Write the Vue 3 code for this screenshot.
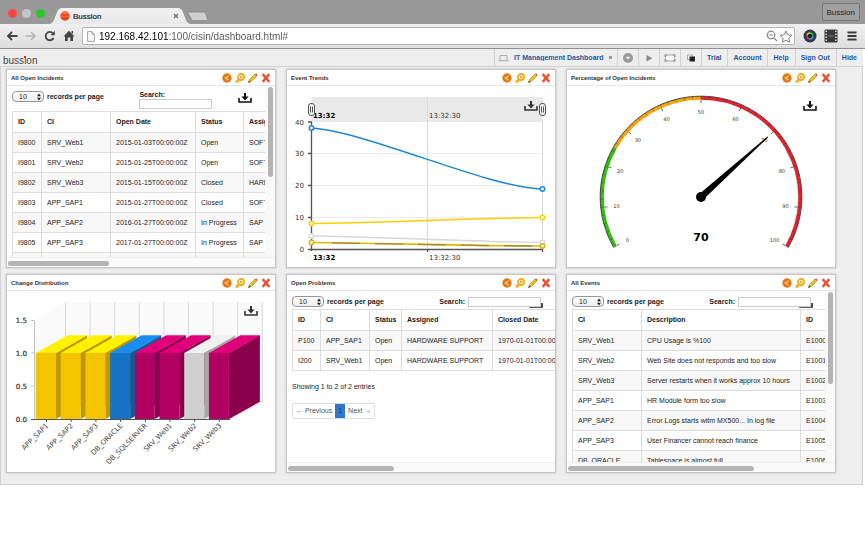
<script setup>
import { ref } from 'vue'

const address = ref('192.168.42.101:100/cisin/dashboard.html#')
const links = ['Trial', 'Account', 'Help', 'Sign Out', 'Hide']
const tools = [
  { id: 'menu-down', label: 'More dashboards' },
  { id: 'play', label: 'Play' },
  { id: 'fullscreen', label: 'Full screen' },
  { id: 'copy', label: 'Duplicate' }
]
const actions = [
  { id: 'share', label: 'Share' },
  { id: 'key', label: 'Filter' },
  { id: 'pencil', label: 'Edit' },
  { id: 'remove', label: 'Remove' }
]

const cards = [
  {
    key: 'incidents',
    title: 'All Open Incidents',
    kind: 'table',
    vertical: true,
    thumbX: 38,
    thumbY: 53,
    cols: [
      { name: 'ID', width: 29 },
      { name: 'CI', width: 69 },
      { name: 'Open Date', width: 85 },
      { name: 'Status', width: 48 },
      { name: 'Assigned', width: 91 }
    ],
    rows: [
      ['I9800', 'SRV_Web1', '2015-01-03T00:00:00Z', 'Open', 'SOFTWARE'],
      ['I9801', 'SRV_Web2', '2015-01-25T00:00:00Z', 'Open', 'SOFTWARE'],
      ['I9802', 'SRV_Web3', '2015-01-15T00:00:00Z', 'Closed', 'HARDWARE'],
      ['I9803', 'APP_SAP1', '2015-01-27T00:00:00Z', 'Closed', 'SOFTWARE'],
      ['I9804', 'APP_SAP2', '2016-01-27T00:00:00Z', 'In Progress', 'SAP'],
      ['I9805', 'APP_SAP3', '2017-01-27T00:00:00Z', 'In Progress', 'SAP'],
      ['', '', '', '', '']
    ]
  },
  { key: 'trends', title: 'Event Trends', kind: 'trend' },
  { key: 'gauge', title: 'Percentage of Open Incidents', kind: 'gauge' },
  { key: 'changes', title: 'Change Distribution', kind: 'bars' },
  {
    key: 'problems',
    title: 'Open Problems',
    kind: 'table',
    compact: true,
    pager: true,
    thumbX: 40,
    cols: [
      { name: 'ID', width: 28 },
      { name: 'CI', width: 49 },
      { name: 'Status', width: 32 },
      { name: 'Assigned', width: 91 },
      { name: 'Closed Date', width: 85 }
    ],
    rows: [
      ['P100', 'APP_SAP1', 'Open', 'HARDWARE SUPPORT', '1970-01-01T00:00:00Z'],
      ['I200', 'SRV_Web1', 'Open', 'HARDWARE SUPPORT', '1970-01-01T00:00:00Z']
    ]
  },
  {
    key: 'events',
    title: 'All Events',
    kind: 'table',
    compact: true,
    vertical: true,
    thumbX: 70,
    thumbY: 54,
    cols: [
      { name: 'CI', width: 69 },
      { name: 'Description', width: 159 },
      { name: 'ID', width: 40 }
    ],
    rows: [
      ['SRV_Web1', 'CPU Usage is %100', 'E1000'],
      ['SRV_Web2', 'Web Site does not responds and too slow', 'E1001'],
      ['SRV_Web3', 'Server restarts when it works approx 10 hours', 'E1002'],
      ['APP_SAP1', 'HR Module form too slow', 'E1003'],
      ['APP_SAP2', 'Error Logs starts witm MX500... İn log file', 'E1004'],
      ['APP_SAP3', 'User Financer cannot reach finance', 'E1005'],
      ['DB_ORACLE', 'Tablespace is almost full', 'E1006']
    ]
  }
]
const tableWidth = (cols) => cols.reduce((sum, c) => sum + c.width, 0)

// Gauge geometry: 0..100 is spread over 240 degrees, 50 at the top
const CX = 134
const CY = 111
const at = (value, r) => {
  const a = ((value - 50) * 2.4 * Math.PI) / 180
  return [CX + r * Math.sin(a), CY - r * Math.cos(a)]
}
const arc = (from, to, r) => {
  const large = (to - from) * 2.4 > 180 ? 1 : 0
  return `M${at(from, r).join(' ')} A${r} ${r} 0 ${large} 1 ${at(to, r).join(' ')}`
}
const tick = (value, r1, r2) => `M${at(value, r1).join(' ')} L${at(value, r2).join(' ')}`
const majors = Array.from({ length: 11 }, (_, i) => i * 10)
const minors = Array.from({ length: 51 }, (_, i) => i * 2)

// Three-dimensional bars
const palette = {
  yellow: ['#f5c400', '#fff200', '#bf9900'],
  blue: ['#1774c4', '#1b8df2', '#125b99'],
  magenta: ['#b20062', '#e0007a', '#8a004c'],
  gray: ['#d0d0d1', '#f0f0f0', '#a6a6a6']
}
const bars = [
  ['APP_SAP1', 'yellow'],
  ['APP_SAP2', 'yellow'],
  ['APP_SAP3', 'yellow'],
  ['DB_ORACLE', 'blue'],
  ['DB_SQLSERVER', 'magenta'],
  ['SRV_Web1', 'magenta'],
  ['SRV_Web2', 'gray'],
  ['SRV_Web3', 'magenta']
].map(([name, tone], i) => ({ name, x: 29 + i * 24.7, c: palette[tone] }))
const walls = Array.from({ length: 9 }, (_, i) => 58.5 + i * 24.6)

const trendDots = [
  [24.5, 150, '#d8d8d8'], [255.5, 156.5, '#d8d8d8'],
  [24.5, 42, '#1c86d6'], [255.5, 103, '#1c86d6'],
  [24.5, 137.5, '#ffcf00'], [255.5, 131.5, '#ffcf00'],
  [24.5, 156.5, '#d9b400'], [255.5, 160, '#d9b400']
]
</script>

<template>
  <svg class="sprite" aria-hidden="true">
    <symbol id="download" viewBox="0 0 14 10">
      <path d="M1 5v4h12V5" fill="none" stroke="currentColor" stroke-width="1.6" />
      <path d="M6 0h2v3.5h2.6L7 7.4 3.4 3.5H6z" fill="currentColor" />
    </symbol>
    <symbol id="share" viewBox="0 0 9 9">
      <circle cx="4.5" cy="4.5" r="4.2" fill="#e8780c" />
      <path d="M6 2.6 3 4.5l3 1.9" fill="none" stroke="#ffe2b0" stroke-width="1" />
    </symbol>
    <symbol id="key" viewBox="0 0 9 9">
      <circle cx="5.4" cy="3.6" r="2.8" fill="#fff0b8" stroke="#f5a80c" stroke-width="1.4" />
      <circle cx="5.5" cy="3.5" r=".9" fill="#f09000" />
      <path d="M3.5 5.5.6 8.5M2 7l1.4 1.2" fill="none" stroke="#f5a80c" stroke-width="1.5" />
    </symbol>
    <symbol id="pencil" viewBox="0 0 9 9">
      <path d="M.5 8.500l.8-2.400L6.400 1 8 2.600 2.900 7.700z" fill="#f0c41c" stroke="#8a6a10" stroke-width=".5" />
      <path d="M6.200 1.200 7.300.2 8.800 1.700 7.800 2.800z" fill="#d9604a" />
      <path d="M.3 8.800.9 7l1.200 1.200z" fill="#333" />
    </symbol>
    <symbol id="remove" viewBox="0 0 9 9">
      <path d="M1.500 1 7.500 8M7.500 1 1.500 8" stroke="#ec5238" stroke-width="2.200" />
    </symbol>
    <symbol id="menu-down" viewBox="0 0 12 12">
      <circle cx="6" cy="6" r="5" fill="#9a9a9a" />
      <path d="M3.600 4.800h4.800L6 7.600z" fill="#f4f4f4" />
    </symbol>
    <symbol id="play" viewBox="0 0 12 12"><path d="M3.500 3v6.400L9.500 6.200z" fill="#8c8c8c" /></symbol>
    <symbol id="fullscreen" viewBox="0 0 12 12">
      <rect x="1.500" y="3" width="9" height="6" fill="#f6f6f6" stroke="#b0b0b0" />
      <path d="M1 5V3h2.500M8.500 3H11v2M11 7v2H8.500M3.500 9H1V7" fill="none" stroke="#999" stroke-width="1.200" />
    </symbol>
    <symbol id="copy" viewBox="0 0 12 12">
      <rect x="2.500" y="3" width="5" height="4.500" fill="#f4f4f4" stroke="#aaa" />
      <rect x="4.500" y="4.500" width="5.500" height="5" fill="#222" />
    </symbol>
  </svg>

  <header class="browser">
    <div class="titlebar">
      <span class="light red"></span><span class="light idle"></span><span class="light green"></span>
      <div class="tab">
        <svg class="favicon" viewBox="0 0 10 10" aria-hidden="true">
          <circle cx="5" cy="5" r="4.700" fill="#e8451c" />
          <path d="M.8 3a4.700 4.700 0 0 1 8.400 0z" fill="#f4754e" />
          <path d="M.5 5.200h9" stroke="#ff8a50" stroke-width=".8" />
        </svg>
        <span class="tab-title">Bussion</span>
        <button class="close" aria-label="Close tab">
          <svg viewBox="0 0 6 6"><path d="M1 1l4 4M5 1 1 5" stroke="#666" stroke-width="1.100" /></svg>
        </button>
      </div>
      <button class="new-tab" aria-label="New tab">
        <svg viewBox="0 0 22 11"><path d="M1.500 1h15.500q1.200 0 1.700 1.200l2 6.300q.3 1.200-1 1.200H6.200q-1.200 0-1.700-1.200L1 2.200Q.7 1 1.500 1z" fill="#cfcfcf" stroke="#7d7d7d" stroke-width=".8" /></svg>
      </button>
      <button class="profile">Bussion</button>
    </div>
    <div class="toolbar">
      <button class="tool" aria-label="Back">
        <svg viewBox="0 0 12 12"><path d="M11.500 6H2.500M6 2 2 6l4 4" fill="none" stroke="#444" stroke-width="1.800" /></svg>
      </button>
      <button class="tool" aria-label="Forward">
        <svg viewBox="0 0 12 12"><path d="M.5 6h9M6 2l4 4-4 4" fill="none" stroke="#b4b4b4" stroke-width="1.600" /></svg>
      </button>
      <button class="tool" aria-label="Reload">
        <svg viewBox="0 0 12 12"><path d="M9.600 8A4.200 4.200 0 1 1 9 3.200" fill="none" stroke="#444" stroke-width="1.800" /><path d="M10.800.8v4.400H6.500z" fill="#444" /></svg>
      </button>
      <button class="tool" aria-label="Home">
        <svg viewBox="0 0 12 12"><path d="M6 .8 11.500 6.500H10V11H7.300V7.500H4.700V11H2V6.500H.5z" fill="#444" /><path d="M8.500 1h1.500v3L8.500 2.500z" fill="#444" /></svg>
      </button>
      <div class="address">
        <svg class="page" viewBox="0 0 8 11" aria-hidden="true"><path d="M.6.6h4.400l2.400 2.600v7.200H.6zM5 .6v2.600h2.400" fill="#fafafa" stroke="#999" stroke-width=".9" /></svg>
        <input v-model="address" class="url" type="text" aria-label="Address" />
        <svg class="lens" viewBox="0 0 12 12" aria-hidden="true"><circle cx="5" cy="5" r="3.800" fill="none" stroke="#888" stroke-width="1.200" /><path d="M3 5h4M8 8l3 3" stroke="#888" stroke-width="1.200" /></svg>
        <svg class="star" viewBox="0 0 14 13" aria-hidden="true"><path d="M7 1l1.700 3.900 4.300.4-3.200 2.800.9 4.100L7 10.100 3.300 12.200l.9-4.100L1 5.300l4.300-.4z" fill="#fff" stroke="#808080" /></svg>
      </div>
      <svg class="ext" viewBox="0 0 14 14" aria-hidden="true">
        <circle cx="7" cy="7" r="6.500" fill="#333945" />
        <circle cx="7" cy="7" r="3" fill="#111" />
        <path d="M4.200 6.500A3 3 0 0 1 7 4" fill="none" stroke="#f0c020" stroke-width="1.600" />
        <path d="M7 4a3 3 0 0 1 2.800 2.500" fill="none" stroke="#30c050" stroke-width="1.600" />
        <path d="M9.800 7A3 3 0 0 1 7 10" fill="none" stroke="#28a8e8" stroke-width="1.600" />
        <path d="M7 10a3 3 0 0 1-2.800-3" fill="none" stroke="#d83090" stroke-width="1.600" />
      </svg>
      <svg class="ext" viewBox="0 0 14 14" aria-hidden="true">
        <rect x=".5" y=".5" width="13" height="13" rx="1" fill="#3a3a3a" />
        <path d="M2.200 1.500v11M11.800 1.500v11" stroke="#ddd" stroke-width="1.400" stroke-dasharray="1.500 1.500" />
        <path d="M4 7h6" stroke="#888" stroke-width=".8" />
      </svg>
      <button class="tool menu" aria-label="Browser menu">
        <svg viewBox="0 0 12 12"><path d="M1.500 2.500h9M1.500 6h9M1.500 9.500h9" stroke="#3c3c3c" stroke-width="2" /></svg>
      </button>
    </div>
  </header>

  <div class="appbar">
    <span class="brand">buss<span class="dot-i">i</span>on</span>
    <nav class="nav">
      <div class="cell picker">
        <svg class="laptop" viewBox="0 0 11 8" aria-hidden="true"><path d="M2 6V1.500h7V6M.3 6.800h10.400" fill="none" stroke="#aaa" /></svg>
        <select aria-label="Dashboard"><option>IT Management Dashboard</option></select>
        <span class="caret"></span>
      </div>
      <button v-for="t in tools" :key="t.id" class="cell icon-cell" :aria-label="t.label">
        <svg><use :href="'#' + t.id" /></svg>
      </button>
      <a v-for="l in links" :key="l" class="cell link" href="#">{{ l }}</a>
    </nav>
  </div>

  <main class="dashboard">
    <section v-for="card in cards" :key="card.key" class="card">
      <header class="card-head">
        <h2>{{ card.title }}</h2>
        <button v-for="a in actions" :key="a.id" class="action" :aria-label="a.label">
          <svg><use :href="'#' + a.id" /></svg>
        </button>
      </header>

      <div v-if="card.kind === 'table'" class="scroller" :class="{ both: card.vertical }">
        <div class="view">
          <div class="controls" :class="{ compact: card.compact }">
            <div class="length">
              <span class="select-box">
                <select :id="card.key + '-length'"><option>10</option></select>
                <svg viewBox="0 0 6 8" aria-hidden="true"><path d="M1 3.300 3 .5l2 2.800zM1 4.700 3 7.500l2-2.800z" fill="#222" /></svg>
              </span>
              <label :for="card.key + '-length'">records per page</label>
            </div>
            <div class="find">
              <label :for="card.key + '-search'">Search:</label>
              <span class="find-box">
                <svg v-if="card.compact" class="tucked"><use href="#download" /></svg>
                <input :id="card.key + '-search'" type="text" />
              </span>
            </div>
            <button v-if="!card.compact" class="download" aria-label="Download"><svg><use href="#download" /></svg></button>
          </div>
          <table :style="{ width: tableWidth(card.cols) + 'px' }">
            <colgroup><col v-for="c in card.cols" :key="c.name" :style="{ width: c.width + 'px' }" /></colgroup>
            <thead><tr><th v-for="c in card.cols" :key="c.name" scope="col">{{ c.name }}</th></tr></thead>
            <tbody>
              <tr v-for="(row, r) in card.rows" :key="r"><td v-for="(v, i) in row" :key="i">{{ v }}</td></tr>
            </tbody>
          </table>
          <template v-if="card.pager">
            <p class="summary">Showing 1 to 2 of 2 entries</p>
            <div class="pager"><a href="#">← Previous</a><a href="#" class="current">1</a><a href="#">Next →</a></div>
          </template>
        </div>
        <div v-if="card.vertical" class="track-y"><div class="thumb" :style="{ height: card.thumbY + '%' }"></div></div>
        <div class="track-x"><div class="thumb" :style="{ width: card.thumbX + '%' }"></div></div>
      </div>

      <svg v-else-if="card.kind === 'trend'" class="chart" viewBox="0 0 268 181" role="img" aria-label="Event trends">
        <rect x="24.500" y="11" width="231.500" height="25" fill="#e9e9e9" />
        <path d="M25 67.500h230M25 99.500h230M25 131.500h230" stroke="#ececec" />
        <path d="M140.500 11v152M255.500 36v127" stroke="#dadada" />
        <path d="M24.500 36v129M21 36h4M21 67.500h4M21 99.500h4M21 131.500h4M21 163.500h235M140.500 163v3M255.500 163v3" fill="none" stroke="#555" stroke-width="1.300" />
        <g class="axis" text-anchor="end">
          <text x="17" y="39">40</text><text x="17" y="70">30</text><text x="17" y="102">20</text>
          <text x="17" y="134">10</text><text x="17" y="166">0</text>
        </g>
        <g class="axis">
          <text x="26" y="32" class="strong">13:32</text><text x="142" y="32">13:32:30</text>
          <text x="26" y="174" class="strong">13:32</text><text x="142" y="174">13:32:30</text>
        </g>
        <g fill="none" stroke-width="1.500">
          <path d="M24.500 150C82 150.500 198 156 255.500 156.500" stroke="#d8d8d8" />
          <path d="M24.500 42C82 46 198 101 255.500 103" stroke="#1c86d6" />
          <path d="M24.500 137.500C82 137 198 132 255.500 131.500" stroke="#ffcf00" />
          <path d="M24.500 156.500C82 157 198 160 255.500 160" stroke="#e0ba00" stroke-width="1.700" />
          <path d="M45 156.800C90 157.500 198 160 255.500 160" stroke="#a3872c" stroke-width="1.300" stroke-dasharray="28 15" />
        </g>
        <circle v-for="(d, i) in trendDots" :key="i" :cx="d[0]" :cy="d[1]" r="2.200" fill="#fff" :stroke="d[2]" stroke-width="1.500" />
        <g fill="#f4f4f4" stroke="#555">
          <rect x="21.500" y="17.500" width="6" height="12" rx="2.500" /><path d="M23.500 20.500v6M25.500 20.500v6" />
          <rect x="252.500" y="17.500" width="6" height="12" rx="2.500" /><path d="M254.500 20.500v6M256.500 20.500v6" />
        </g>
        <use href="#download" x="237" y="15" width="14" height="10" color="#333" />
      </svg>

      <svg v-else-if="card.kind === 'gauge'" class="chart" viewBox="0 0 268 181" role="img" aria-label="70 percent of incidents are open">
        <g fill="none">
          <path :d="arc(0, 25, 99)" stroke="#2fc20a" stroke-width="3.500" />
          <path :d="arc(25, 50, 99)" stroke="#fba30a" stroke-width="3.500" />
          <path :d="arc(50, 100, 99)" stroke="#e32330" stroke-width="3.500" />
          <path :d="arc(0, 100, 100.8)" stroke="#333" stroke-width=".9" />
          <path v-for="m in minors" :key="m" :d="tick(m, 101, 97.5)" stroke="#222" stroke-opacity=".5" stroke-width=".6" />
          <path v-for="m in majors" :key="m" :d="tick(m, 97, 94)" stroke="#444" stroke-width=".8" />
        </g>
        <g class="scale" text-anchor="middle">
          <text v-for="m in majors" :key="m" :x="at(m, 85)[0]" :y="at(m, 85)[1] + 2">{{ m }}</text>
        </g>
        <path d="M-3.500 0-.5-90H.5L3.500 0z" :transform="`translate(${CX} ${CY}) rotate(48)`" />
        <circle :cx="CX" :cy="CY" r="5" />
        <text class="reading" :x="CX" y="155" text-anchor="middle">70</text>
        <use href="#download" x="236" y="15" width="14" height="10" color="#111" />
      </svg>

      <svg v-else class="chart" viewBox="0 0 268 181" role="img" aria-label="Change distribution">
        <path d="M27.300 29.500 58.500 11.300H255.300V110.700L223 128H27.300z" fill="#fafafa" />
        <path d="M58.500 110.500h197L223 128" fill="none" stroke="#e2e2e2" />
        <path v-for="w in walls" :key="w" :d="`M${w} 11V111`" stroke="#d9d9d9" />
        <path d="M27.500 29.500V128M24 29.500h3.500M24 62h3.500M24 95h3.500" stroke="#c4c4c4" fill="none" />
        <g v-for="b in bars" :key="b.name" :transform="`translate(${b.x} 0)`">
          <path d="M20 62 51 44.300V110.700L20 128z" :fill="b.c[2]" />
          <path d="M0 62 31.500 44.300H51.500L20 62z" :fill="b.c[1]" />
          <path d="M0 62h20v66H0z" :fill="b.c[0]" />
          <path d="M10.500 128v3" stroke="#555" />
          <text class="bar-label" transform="translate(13 135) rotate(-45)" text-anchor="end">{{ b.name }}</text>
        </g>
        <path d="M24 128.500h199" stroke="#555" />
        <g class="axis semi" text-anchor="end">
          <text x="20" y="32">1.5</text><text x="20" y="65">1.0</text><text x="20" y="98">0.5</text><text x="20" y="131">0.0</text>
        </g>
        <use href="#download" x="237" y="15" width="14" height="10" color="#333" />
      </svg>
    </section>
  </main>
</template>

<style>
body {
  margin: 0;
  background: #fff;
  font-family: "Liberation Sans", Arial, sans-serif;
}
</style>

<style scoped>
* { box-sizing: border-box; }
button, select, input {
  margin: 0;
  padding: 0;
  border: 0;
  background: none;
  font: inherit;
  color: inherit;
  appearance: none;
  border-radius: 0;
}
button svg { display: block; width: 100%; height: 100%; }
a { color: inherit; text-decoration: none; }
.sprite { position: absolute; width: 0; height: 0; }

.titlebar {
  display: flex;
  align-items: center;
  height: 24px;
  padding: 0 5px 0 8px;
  background: #999;
}
.light { width: 9px; height: 9px; margin: 2px 5px 0 0; border-radius: 50%; }
.red { background: #fc4744; }
.idle { background: #c6c6c6; }
.green { background: #2ec52f; }
.tab {
  display: flex;
  align-self: flex-end;
  align-items: center;
  width: 140px;
  height: 16px;
  padding: 0 11px 0 10px;
  background: linear-gradient(#f2f2f2, #e8e8e8);
  clip-path: polygon(0 100%, 3px 88%, 8px 12%, 11px 0, 129px 0, 132px 12%, 137px 88%, 140px 100%);
}
.favicon { width: 10px; height: 10px; }
.tab-title { flex: 1; margin-left: 3px; font-size: 8px; color: #222; -webkit-text-stroke: 0.2px #222; }
.close { width: 6px; height: 6px; }
.new-tab { width: 22px; height: 11px; margin-left: -3px; margin-top: 8px; }
.profile {
  height: 18px;
  margin-left: auto;
  padding: 0 4px;
  border: 1px solid #777;
  border-radius: 2px;
  background: #a0a0a0;
  font-size: 8px;
  color: #222;
}
.toolbar {
  display: flex;
  align-items: center;
  gap: 7px;
  height: 25px;
  padding: 0 7px 0 6px;
  border-bottom: 1px solid #909090;
  background: linear-gradient(#f0f0f0, #dedede);
}
.tool { width: 12px; height: 12px; }
.address {
  display: flex;
  flex: 1;
  align-items: center;
  height: 18px;
  margin-right: 1px;
  padding: 0 1px 0 4px;
  border: 1px solid #b4b4b4;
  border-radius: 2px;
  background: #fff;
}
.page { width: 8px; height: 11px; margin-right: 4px; }
.url {
  flex: 1;
  min-width: 0;
  height: 16px;
  font-size: 10px;
  background: linear-gradient(90deg, #000 69px, #555 69px);
  background-clip: text;
  -webkit-text-fill-color: transparent;
}
.lens { width: 12px; height: 12px; margin-right: 1px; }
.star { width: 14px; height: 13px; }
.ext { width: 14px; height: 14px; }
.menu { margin-left: 1px; }

.appbar {
  display: flex;
  align-items: stretch;
  justify-content: space-between;
  height: 17px;
  margin-right: 2px;
  background: #eee;
}
.brand { padding: 6px 0 0 3px; font-size: 10px; line-height: 11px; color: #444; }
.dot-i { position: relative; }
.dot-i::before {
  content: "";
  position: absolute;
  top: 1px;
  left: 0;
  width: 2px;
  height: 2px;
  background: #f02010;
}
.nav { display: flex; font-size: 7px; font-weight: bold; color: #2457a3; }
.cell { display: flex; align-items: center; border-left: 1px solid #d2d2d2; }
.picker { gap: 5px; padding: 0 5px 0 3px; }
.picker select { height: 14px; }
.laptop { width: 11px; height: 8px; }
.caret { width: 3px; height: 3px; background: #999; }
.icon-cell { justify-content: center; width: 21px; }
.icon-cell svg { width: 12px; height: 12px; }
.link { padding: 0 6px 0 5px; }

.dashboard {
  display: grid;
  grid-template-columns: repeat(3, minmax(0, 1fr));
  gap: 6px 10px;
  margin-right: 2px;
  padding: 2px 26px 11px 5px;
  border: 1px solid #d2d2d2;
  background: #eee;
}
.card {
  display: flex;
  flex-direction: column;
  height: 199px;
  border: 1px solid #c6c6c6;
  background: #fff;
  box-shadow: 0 0 2px #bbb;
}
.card-head {
  display: flex;
  align-items: center;
  gap: 3px;
  height: 16px;
  padding: 0 4px;
  border-bottom: 1px solid #e8e8e8;
}
.card-head h2 { flex: 1; margin: 0; font-size: 6px; line-height: 8px; color: #333; }
.action { width: 10px; height: 10px; }
.chart { flex: 1; min-height: 0; width: 100%; }

.scroller {
  display: grid;
  flex: 1;
  grid-template: minmax(0, 1fr) 10px / minmax(0, 1fr);
  min-height: 0;
  font-size: 7px;
  color: #222;
}
.scroller.both { grid-template-columns: minmax(0, 1fr) 10px; }
.view { overflow: hidden; padding-left: 5px; }
.track-y { padding: 1px 2px 0 3px; background: #fafafa; }
.track-x { padding: 3px 1px 0; border-top: 1px solid #eee; background: #fafafa; }
.both .track-x { grid-column: 1 / 3; }
.thumb { border-radius: 3px; background: #b4b4b4; }
.track-x .thumb { height: 5px; }

.controls {
  display: flex;
  justify-content: space-between;
  height: 25px;
  padding: 5px 13px 0 0;
  font-weight: bold;
}
.length { display: flex; align-items: center; gap: 3px; height: 11px; }
.select-box { position: relative; display: flex; }
.select-box select {
  width: 32px;
  height: 11px;
  padding-left: 6px;
  border: 1px solid #999;
  border-radius: 4px;
  background: linear-gradient(#fff, #eee);
  font-weight: normal;
}
.select-box svg { position: absolute; right: 2px; top: 2px; width: 6px; height: 8px; pointer-events: none; }
.find { line-height: 8px; }
.find label { display: block; }
.find-box { position: relative; display: flex; }
.find input { position: relative; width: 73px; height: 10px; padding: 0 2px; border: 1px solid #ccc; background: #fff; }
.download { width: 14px; height: 10px; margin-top: 2px; color: #111; }
.compact { height: 18px; padding-right: 14px; }
.compact .find { display: flex; align-items: center; gap: 3px; height: 11px; }
.tucked { position: absolute; right: -2px; bottom: -1px; width: 14px; height: 10px; color: #222; }
.controls:not(.compact) .find { margin-right: -10px; }

table { table-layout: fixed; border-collapse: collapse; border: 1px solid #ddd; }
th, td { height: 20px; padding: 0 5px; border: 1px solid #ddd; text-align: left; white-space: nowrap; line-height: 8px; }
th { height: 21px; }
tbody tr:nth-child(odd) { background: #f8f8f8; }
.summary { margin: 12px 0; line-height: 8px; }
.pager { display: inline-flex; border: 1px solid #ddd; border-radius: 2px; line-height: 14px; color: #555; }
.pager a { padding: 0 3px; }
.pager .current { background: #3276c8; color: #223c60; }

.axis { font: 7px "DejaVu Sans", sans-serif; fill: #333; }
.strong { font-weight: bold; fill: #000; }
.semi { stroke: #333; stroke-width: 0.2px; }
.scale { font: 5px "DejaVu Sans", sans-serif; fill: #333; }
.reading { font: bold 11px "DejaVu Sans", sans-serif; }
.bar-label { font: 7px "DejaVu Sans", sans-serif; fill: #444; }
</style>
